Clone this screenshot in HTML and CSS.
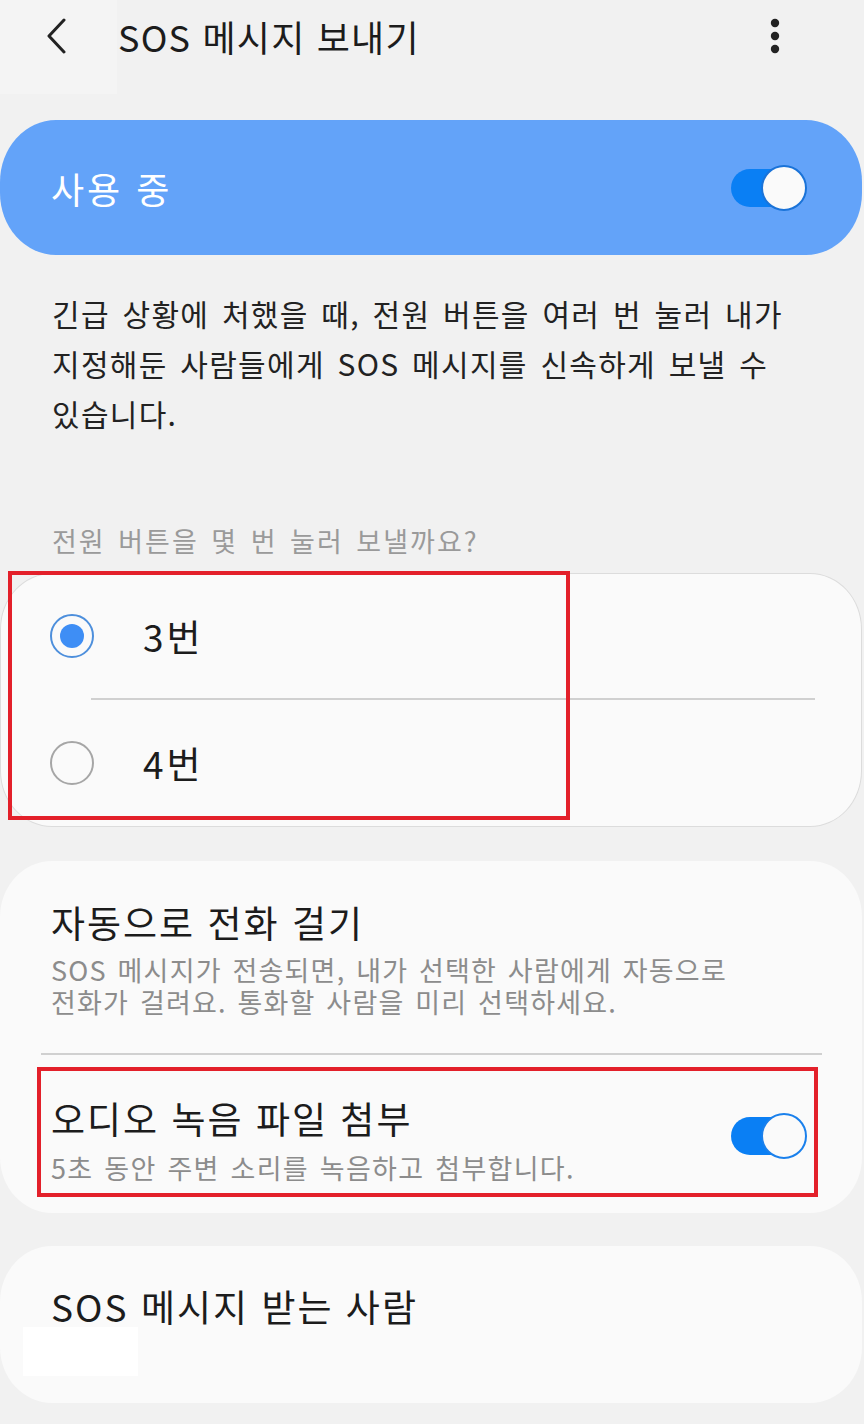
FILE: index.html
```html
<!DOCTYPE html>
<html lang="ko">
<head>
<meta charset="utf-8">
<link rel="stylesheet" href="styles.css">
</head>
<body>
<div class="patch-top"></div>
<header class="appbar">
  <svg class="back" width="26" height="36" viewBox="0 0 26 36"><path d="M20 2 L5 18 L20 34" fill="none" stroke="#222" stroke-width="3" stroke-linecap="round" stroke-linejoin="round"/></svg>
  <h1 class="title">SOS 메시지 보내기</h1>
  <svg class="more" width="12" height="40" viewBox="0 0 12 40"><circle cx="6" cy="7" r="4.2" fill="#222"/><circle cx="6" cy="20" r="4.2" fill="#222"/><circle cx="6" cy="33" r="4.2" fill="#222"/></svg>
</header>

<section class="master">
  <span class="master-label">사용 중</span>
  <span class="toggle toggle-dark"><span class="track"></span><span class="thumb"></span></span>
</section>

<p class="desc">긴급 상황에 처했을 때, 전원 버튼을 여러 번 눌러 내가<br>지정해둔 사람들에게 SOS 메시지를 신속하게 보낼 수<br>있습니다.</p>

<p class="subhead">전원 버튼을 몇 번 눌러 보낼까요?</p>

<section class="card radio-card">
  <div class="radio-row"><span class="radio checked"></span><span class="radio-label">3번</span></div>
  <div class="divider radio-divider"></div>
  <div class="radio-row row2"><span class="radio"></span><span class="radio-label">4번</span></div>
  <div class="mark mark-radio"></div>
</section>

<section class="card options-card">
  <div class="opt">
    <div class="opt-title">자동으로 전화 걸기</div>
    <div class="opt-sub">SOS 메시지가 전송되면, 내가 선택한 사람에게 자동으로<br>전화가 걸려요. 통화할 사람을 미리 선택하세요.</div>
  </div>
  <div class="divider opt-divider"></div>
  <div class="opt opt-switch">
    <div class="opt-text">
      <div class="opt-title">오디오 녹음 파일 첨부</div>
      <div class="opt-sub">5초 동안 주변 소리를 녹음하고 첨부합니다.</div>
    </div>
    <span class="toggle"><span class="track"></span><span class="thumb"></span></span>
  </div>
  <div class="mark mark-opt"></div>
</section>

<section class="card recip-card">
  <div class="opt-title">SOS 메시지 받는 사람</div>
  <div class="patch-white"></div>
</section>
</body>
</html>
```

FILE: styles.css
```css
* { box-sizing: border-box; }
html, body { margin: 0; padding: 0; }
body {
  width: 864px;
  height: 1424px;
  overflow: hidden;
  background: #f1f1f1;
  font-family: "Noto Sans CJK KR", "Noto Sans", sans-serif;
  color: #1c1c1c;
  position: relative;
}
.patch-top {
  position: absolute;
  left: 0; top: 0;
  width: 117px; height: 94px;
  background: #f4f4f4;
}
.appbar {
  position: relative;
  height: 72px;
  display: flex;
  align-items: center;
  padding-left: 44px;
  padding-right: 83px;
}
.back { display: block; }
.title {
  margin: 0 0 0 48px;
  font-size: 36px;
  font-weight: 400;
  line-height: 72px;
  color: #1c1c1c;
  flex: 1;
  letter-spacing: 1.2px;
}
.more { display: block; }

.master {
  margin: 48px 2px 0 0;
  height: 135px;
  background: #63a3f9;
  border-radius: 56px / 62px;
  display: flex;
  align-items: center;
  justify-content: space-between;
  padding: 0 55px 0 51px;
}
.master-label {
  color: #ffffff;
  font-size: 36px;
  line-height: 46px;
  letter-spacing: 3px;
}
.toggle {
  position: relative;
  display: inline-block;
  width: 76px;
  height: 46px;
  flex: none;
}
.toggle .track {
  position: absolute;
  left: 0; top: 4px;
  width: 60px; height: 38px;
  border-radius: 19px;
  background: #0a7ff4;
}
.toggle .thumb {
  position: absolute;
  right: 0; top: 0;
  width: 46px; height: 46px;
  border-radius: 50%;
  background: #fafafa;
  border: 2.5px solid #1a80ec;
}
.toggle-dark .thumb { border-color: #1a73d8; }

.desc {
  margin: 33px 0 0 52px;
  font-size: 30px;
  line-height: 50px;
  color: #222;
  letter-spacing: 1.3px;
  word-spacing: 3px;
}
.subhead {
  margin: 83px 0 0 52px;
  font-size: 27px;
  line-height: 40px;
  color: #9a9a9a;
  letter-spacing: 2px;
  word-spacing: 3px;
}

.card {
  position: relative;
  background: #fafafa;
  border-radius: 52px / 56px;
  margin-right: 2px;
}
.radio-card {
  margin-top: 12px;
  border: 1px solid #dcdcdc;
}
.radio-row {
  height: 124px;
  display: flex;
  align-items: center;
  padding-left: 49px;
}
.row2 { height: 126px; }
.radio {
  width: 44px; height: 44px;
  border-radius: 50%;
  border: 2px solid #a6a6a6;
  flex: none;
  position: relative;
  background: #fafafa;
}
.radio.checked { border-color: #4d8fdc; }
.radio.checked::after {
  content: "";
  position: absolute;
  left: 8px; top: 8px;
  width: 24px; height: 24px;
  border-radius: 50%;
  background: #3e8ef5;
}
.radio-label {
  margin-left: 49px;
  font-size: 37px;
  line-height: 46px;
  color: #1c1c1c;
  letter-spacing: 3px;
}
.divider { height: 2px; background: #d0d0d0; }
.radio-divider { margin: 0 46px 0 90px; }

.mark {
  position: absolute;
  border: 4px solid #e3202a;
  pointer-events: none;
}
.mark-radio {
  left: 7px; top: -3px;
  width: 562px; height: 249px;
}

.options-card {
  margin-top: 34px;
  padding: 38px 0 29px;
}
.opt { padding: 0 51px; }
.opt-title {
  font-size: 37px;
  line-height: 46px;
  color: #1c1c1c;
  letter-spacing: 2px;
}
.opt-sub {
  margin-top: 9px;
  font-size: 27px;
  line-height: 32px;
  color: #8c8c8c;
  letter-spacing: 1.2px;
  word-spacing: 2px;
}
.opt-divider { margin: 35px 40px 0 41px; }
.opt-switch {
  margin-top: 40px;
  display: flex;
  align-items: center;
  justify-content: space-between;
  padding-right: 55px;
}
.opt-switch .opt-sub { margin-top: 11px; letter-spacing: 1.3px; }
.opt-switch .toggle { margin-top: -8px; }
.mark-opt {
  left: 37px; top: 206px;
  width: 781px; height: 130px;
}

.recip-card {
  margin-top: 33px;
  height: 157px;
  padding: 37px 51px 0;
}
.patch-white {
  position: absolute;
  left: 23px; top: 81px;
  width: 115px; height: 49px;
  background: #ffffff;
}
```
